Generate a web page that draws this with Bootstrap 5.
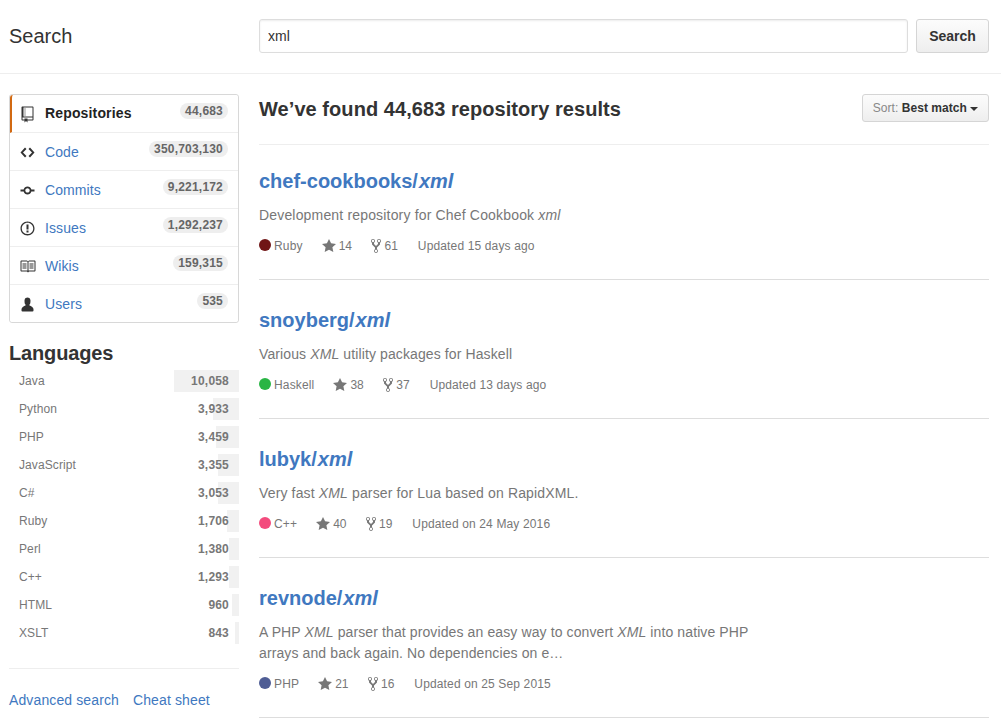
<!DOCTYPE html>
<html lang="en">
<head>
<meta charset="utf-8">
<meta name="viewport" content="width=device-width, initial-scale=1">
<title>Search · xml</title>
<link href="https://cdn.jsdelivr.net/npm/bootstrap@5.3.0/dist/css/bootstrap.min.css" rel="stylesheet">
<style>
body{font-family:"Liberation Sans",Arial,sans-serif;font-size:14px;line-height:21px;color:#333;overflow:hidden;height:723px}
a{color:#4078c0;text-decoration:none}
svg{fill:currentColor;display:block;flex:none;overflow:visible}
.topbar{height:74px;padding:19px 12px 0 9px;border-bottom:1px solid #eee}
.side{width:230px;flex:none}
.page-title{font-size:20px;line-height:34px;font-weight:400}
.query{height:34px;padding:0 8px;font-size:14px;color:#333;border:1px solid #ddd;border-radius:3px;box-shadow:inset 0 1px 2px rgba(0,0,0,.075)}
.btn-soft{color:#333;font-weight:700;border:1px solid #d5d5d5;border-radius:3px;background:linear-gradient(#fcfcfc,#eee);white-space:nowrap}
.btn-search{width:73px;height:34px;font-size:14px;padding:0}
.btn-sort{height:28px;font-size:12px;line-height:26px;padding:0 10px;letter-spacing:.06px}
.btn-sort .lbl{color:#888;font-weight:400}
.caret{display:inline-block;border:4px solid transparent;border-top-color:#333;border-bottom:0;vertical-align:middle;margin-left:3px}
.main-area{padding:20px 12px 0 9px;gap:20px}
.menu{border:1px solid #d8d8d8;border-radius:3px}
.menu .list-group-item{height:38px;padding:0 10px;border:0;border-bottom:1px solid #eee;color:#4078c0;display:flex;align-items:flex-start;background:#fff}
.menu .list-group-item:last-child{border-bottom:0;height:37px}
.menu .current{color:#222;font-weight:700;border-left:2px solid #d26911;padding-left:8px}
.menu .ico{width:16px;height:16px;margin:11px 9px 0 0;display:flex;justify-content:center;color:#333}
.ico path{transform:translate(-.5px,.4px)}
.menu .txt{line-height:21px;margin-top:9px;letter-spacing:.1px}
.menu .current .txt{margin-top:8px;letter-spacing:.15px}
.pill{font-size:12px;font-weight:700;line-height:14px;height:16px;padding:1px 5px;margin-top:8px;border-radius:10px;background:#eee;color:#666;letter-spacing:.2px}
h2,h3{font-size:20px;font-weight:700;margin:0}
.lang-title{line-height:24px;margin:18px 0 5px;letter-spacing:-.15px}
.langs{font-size:12px;color:#777;letter-spacing:.1px}
.langs li{height:22px;line-height:22px;margin-bottom:6px;padding:0 10px;position:relative}
.langs b{position:relative;letter-spacing:.2px}
.bar{position:absolute;right:0;top:0;bottom:0;background:#f1f1f1}
.foot{margin-top:24px;border-top:1px solid #eee;padding-top:21px;gap:14px;letter-spacing:.12px}
.heading{height:51px;border-bottom:1px solid #eee}
.heading h2{line-height:30px;letter-spacing:.06px}
.repo{padding:28px 0 24px;border-bottom:1px solid #ddd;color:#777}
.repo:nth-child(2){padding-top:24px}
.repo h3{line-height:24px;margin-bottom:12px}
.repo h3 em{margin-left:1px}
.repo p{width:510px;margin-bottom:11px;line-height:21px;letter-spacing:.11px}
.repo:nth-child(2) p{letter-spacing:.17px}
.repo:nth-child(4) p{letter-spacing:.14px}
.meta{font-size:12px;line-height:18px;height:18px}
.dot{width:12px;height:12px;border-radius:50%;margin:0 3px 2px 0}
.meta .m{margin-right:19.5px}
.meta .l{margin-right:19px;letter-spacing:.15px}
.meta .s,.meta .f{margin-right:3px}
.meta .when{letter-spacing:.14px;margin-left:.5px}
</style>
</head>
<body>
<svg width="0" height="0" style="position:absolute" aria-hidden="true">
<symbol id="star" viewBox="0 0 14 16"><path d="M14 6l-4.9-.64L7 1 4.9 5.36 0 6l3.6 3.26L2.67 14 7 11.67 11.33 14l-.93-4.74z"/></symbol>
<symbol id="fork" viewBox="0 0 10 16"><path d="M8 1a1.993 1.993 0 0 0-1 3.72V6L5 8 3 6V4.72A1.993 1.993 0 0 0 2 1a1.993 1.993 0 0 0-1 3.72V6.5l3 3v1.78A1.993 1.993 0 0 0 5 15a1.993 1.993 0 0 0 1-3.72V9.5l3-3V4.72A1.993 1.993 0 0 0 8 1zM2 4.2C1.34 4.2.8 3.65.8 3c0-.65.55-1.2 1.2-1.2.65 0 1.2.55 1.2 1.2 0 .65-.55 1.2-1.2 1.2zm3 10c-.66 0-1.2-.55-1.2-1.2 0-.65.55-1.2 1.2-1.2.65 0 1.2.55 1.2 1.2 0 .65-.55 1.2-1.2 1.2zm3-10c-.66 0-1.2-.55-1.2-1.2 0-.65.55-1.2 1.2-1.2.65 0 1.2.55 1.2 1.2 0 .65-.55 1.2-1.2 1.2z"/></symbol>
</svg>
<header class="topbar d-flex">
<div class="side page-title">Search</div>
<form class="d-flex flex-grow-1 ms-3 ps-1 gap-2"><input class="form-control query" value="xml" aria-label="Search"><button type="button" class="btn btn-soft btn-search flex-shrink-0">Search</button></form>
</header>
<div class="main-area d-flex">
<aside class="side">
<nav class="menu list-group">
<a href="#" class="list-group-item current"><span class="ico"><svg width="12" height="16" viewBox="0 0 12 16"><path d="M4 9H3V8h1v1zm0-3H3v1h1V6zm0-2H3v1h1V4zm0-2H3v1h1V2zm8-1v12c0 .55-.45 1-1 1H6v2l-1.5-1.5L3 16v-2H1c-.55 0-1-.45-1-1V1c0-.55.45-1 1-1h10c.55 0 1 .45 1 1zm-1 10H1v2h2v-1h3v1h5v-2zm0-10H2v9h9V1z"/></svg></span><span class="txt">Repositories</span><span class="pill ms-auto">44,683</span></a>
<a href="#" class="list-group-item"><span class="ico"><svg width="14" height="16" viewBox="0 0 14 16"><path d="M9.5 3L8 4.5 11.5 8 8 11.5 9.5 13 14 8 9.5 3zm-5 0L0 8l4.5 5L6 11.5 2.5 8 6 4.5 4.5 3z"/></svg></span><span class="txt">Code</span><span class="pill ms-auto">350,703,130</span></a>
<a href="#" class="list-group-item"><span class="ico"><svg width="14" height="16" viewBox="0 0 14 16"><path d="M10.86 7c-.45-1.72-2-3-3.86-3-1.86 0-3.41 1.28-3.86 3H0v2h3.14c.45 1.72 2 3 3.86 3 1.86 0 3.41-1.28 3.86-3H14V7h-3.14zM7 10.2c-1.22 0-2.2-.98-2.2-2.2 0-1.22.98-2.2 2.2-2.2 1.22 0 2.2.98 2.2 2.2 0 1.22-.98 2.2-2.2 2.2z"/></svg></span><span class="txt">Commits</span><span class="pill ms-auto">9,221,172</span></a>
<a href="#" class="list-group-item"><span class="ico"><svg width="14" height="16" viewBox="0 0 14 16"><path d="M7 2.3c3.14 0 5.7 2.56 5.7 5.7s-2.56 5.7-5.7 5.7A5.71 5.71 0 0 1 1.3 8c0-3.14 2.56-5.7 5.7-5.7zM7 1C3.14 1 0 4.14 0 8s3.14 7 7 7 7-3.14 7-7-3.14-7-7-7zm1 3H6v5h2V4zm0 6H6v2h2v-2z"/></svg></span><span class="txt">Issues</span><span class="pill ms-auto">1,292,237</span></a>
<a href="#" class="list-group-item"><span class="ico"><svg width="16" height="16" viewBox="0 0 16 16"><path d="M3 5h4v1H3V5zm0 3h4V7H3v1zm0 2h4V9H3v1zm11-5h-4v1h4V5zm0 2h-4v1h4V7zm0 2h-4v1h4V9zm2-6v9c0 .55-.45 1-1 1H9.5l-1 1-1-1H2c-.55 0-1-.45-1-1V3c0-.55.45-1 1-1h5.5l1 1 1-1H15c.55 0 1 .45 1 1zm-8 .5L7.5 3H2v9h6V3.5zm7-.5H9.5l-.5.5V12h6V3z"/></svg></span><span class="txt">Wikis</span><span class="pill ms-auto">159,315</span></a>
<a href="#" class="list-group-item"><span class="ico"><svg width="12" height="16" viewBox="0 0 12 16"><path d="M12 14.002a.998.998 0 0 1-.998.998H1.001A1 1 0 0 1 0 13.999V13c0-2.633 4-4 4-4s.229-.409 0-1c-.841-.62-.944-1.59-1-4 .173-2.413 1.867-3 3-3s2.827.586 3 3c-.056 2.41-.159 3.38-1 4-.229.59 0 1 0 1s4 1.367 4 4v1.002z"/></svg></span><span class="txt">Users</span><span class="pill ms-auto">535</span></a>
</nav>
<h2 class="lang-title">Languages</h2>
<ul class="langs list-unstyled mb-0">
<li class="d-flex justify-content-between"><span class="bar" style="width:65px"></span>Java<b>10,058</b></li>
<li class="d-flex justify-content-between"><span class="bar" style="width:26px"></span>Python<b>3,933</b></li>
<li class="d-flex justify-content-between"><span class="bar" style="width:23px"></span>PHP<b>3,459</b></li>
<li class="d-flex justify-content-between"><span class="bar" style="width:21px"></span>JavaScript<b>3,355</b></li>
<li class="d-flex justify-content-between"><span class="bar" style="width:21px"></span>C#<b>3,053</b></li>
<li class="d-flex justify-content-between"><span class="bar" style="width:12px"></span>Ruby<b>1,706</b></li>
<li class="d-flex justify-content-between"><span class="bar" style="width:10px"></span>Perl<b>1,380</b></li>
<li class="d-flex justify-content-between"><span class="bar" style="width:10px"></span>C++<b>1,293</b></li>
<li class="d-flex justify-content-between"><span class="bar" style="width:7px"></span>HTML<b>960</b></li>
<li class="d-flex justify-content-between"><span class="bar" style="width:4px"></span>XSLT<b>843</b></li>
</ul>
<div class="foot d-flex"><a href="#">Advanced search</a><a href="#">Cheat sheet</a></div>
</aside>
<main class="flex-grow-1">
<div class="heading d-flex justify-content-between align-items-start"><h2>We’ve found 44,683 repository results</h2><button class="btn btn-soft btn-sort" type="button"><span class="lbl">Sort:</span> Best match<span class="caret"></span></button></div>
<article class="repo"><h3><a href="#">chef-cookbooks/<em>xml</em></a></h3><p>Development repository for Chef Cookbook <em>xml</em></p>
<div class="meta d-flex align-items-center"><span class="dot" style="background:#701516"></span><span class="l">Ruby</span><svg width="14" height="16" class="s"><use href="#star"/></svg><span class="m">14</span><svg width="10" height="16" class="f"><use href="#fork"/></svg><span class="m">61</span><span class="when">Updated 15 days ago</span></div></article>
<article class="repo"><h3><a href="#">snoyberg/<em>xml</em></a></h3><p>Various <em>XML</em> utility packages for Haskell</p>
<div class="meta d-flex align-items-center"><span class="dot" style="background:#29b544"></span><span class="l">Haskell</span><svg width="14" height="16" class="s"><use href="#star"/></svg><span class="m">38</span><svg width="10" height="16" class="f"><use href="#fork"/></svg><span class="m">37</span><span class="when">Updated 13 days ago</span></div></article>
<article class="repo"><h3><a href="#">lubyk/<em>xml</em></a></h3><p>Very fast <em>XML</em> parser for Lua based on RapidXML.</p>
<div class="meta d-flex align-items-center"><span class="dot" style="background:#f34b7d"></span><span class="l">C++</span><svg width="14" height="16" class="s"><use href="#star"/></svg><span class="m">40</span><svg width="10" height="16" class="f"><use href="#fork"/></svg><span class="m">19</span><span class="when">Updated on 24 May 2016</span></div></article>
<article class="repo"><h3><a href="#">revnode/<em>xml</em></a></h3><p>A PHP <em>XML</em> parser that provides an easy way to convert <em>XML</em> into native PHP arrays and back again. No dependencies on e…</p>
<div class="meta d-flex align-items-center"><span class="dot" style="background:#4f5d95"></span><span class="l">PHP</span><svg width="14" height="16" class="s"><use href="#star"/></svg><span class="m">21</span><svg width="10" height="16" class="f"><use href="#fork"/></svg><span class="m">16</span><span class="when">Updated on 25 Sep 2015</span></div></article>
</main>
</div>
<script src="https://cdn.jsdelivr.net/npm/bootstrap@5.3.0/dist/js/bootstrap.bundle.min.js"></script>
</body>
</html>
